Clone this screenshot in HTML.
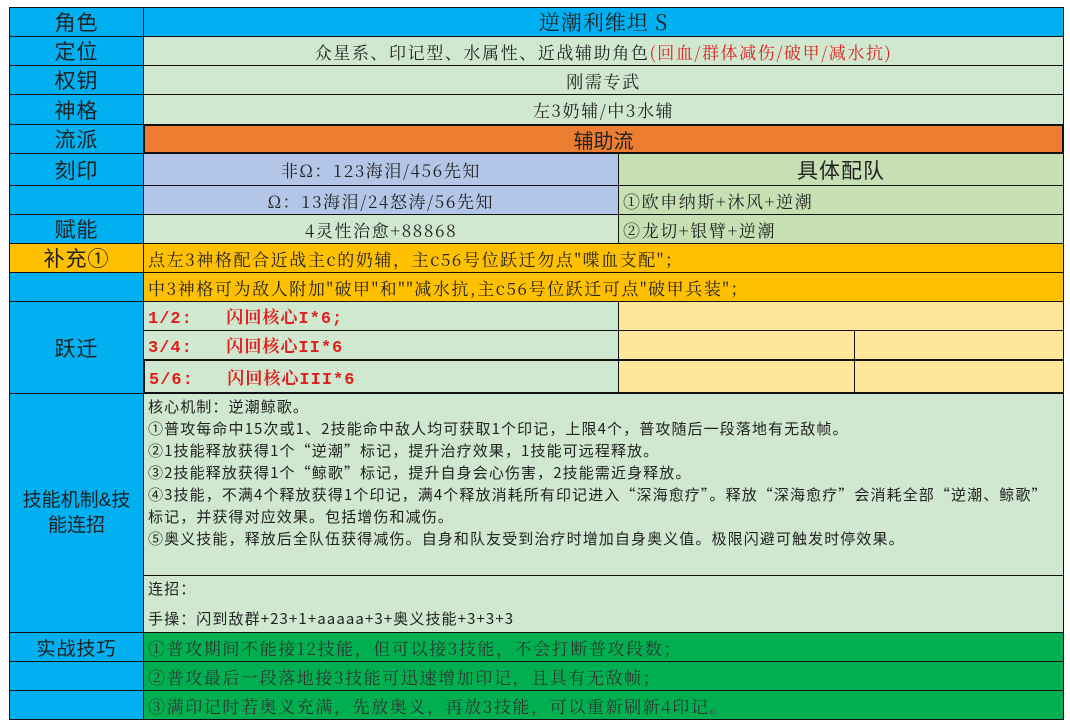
<!DOCTYPE html>
<html><head><meta charset="utf-8"><style>
body{margin:0;width:1070px;height:727px;background:#fff;position:relative;overflow:hidden;font-family:"Liberation Serif","Noto Serif CJK SC",serif;color:#222}
.c{position:absolute;box-sizing:border-box;border:1px solid #111;display:flex;align-items:center;white-space:nowrap;overflow:hidden}
.L{background:#00b0f0;justify-content:center;font-family:"Liberation Sans","Noto Sans CJK SC",sans-serif;font-size:21px;color:#222;letter-spacing:1px}
.g{background:#cfe8cf}
.ctr{justify-content:center}
.t16{font-size:17px;letter-spacing:1.6px;font-family:"Noto Serif CJK SC",serif}
.p{padding-left:4px}
.red{color:#e0201e;font-weight:bold;font-size:17px;padding-left:4px;font-family:"Liberation Mono","Noto Serif CJK SC",monospace;letter-spacing:1px}
.sk{position:absolute;left:148px;top:396px;font-family:"Noto Sans CJK SC",sans-serif;font-size:15px;letter-spacing:1.1px;line-height:22px;color:#222;white-space:nowrap}
</style></head><body>
<div class="c L" style="left:9px;top:7px;width:135px;height:30px">角色</div>
<div class="c L ctr" style="left:143px;top:7px;width:921px;height:30px;font-family:'Noto Serif CJK SC',serif">逆潮利维坦 S</div>
<div class="c L" style="left:9px;top:36px;width:135px;height:30px">定位</div>
<div class="c g ctr t16" style="left:143px;top:36px;width:921px;height:30px">众星系、印记型、水属性、近战辅助角色<span style="color:#e0201e">(回血/群体减伤/破甲/减水抗)</span></div>
<div class="c L" style="left:9px;top:65px;width:135px;height:30px">权钥</div>
<div class="c g ctr t16" style="left:143px;top:65px;width:921px;height:30px">刚需专武</div>
<div class="c L" style="left:9px;top:94px;width:135px;height:31px">神格</div>
<div class="c g ctr t16" style="left:143px;top:94px;width:921px;height:31px">左3奶辅/中3水辅</div>
<div class="c L" style="left:9px;top:124px;width:135px;height:30px">流派</div>
<div class="c ctr" style="left:143px;top:124px;width:921px;height:30px;background:#ed7d31;font-size:20px;font-family:'Liberation Sans','Noto Sans CJK SC',sans-serif;border-width:2px">辅助流</div>
<div class="c L" style="left:9px;top:153px;width:135px;height:33px">刻印</div>
<div class="c ctr t16" style="left:143px;top:153px;width:476px;height:33px;background:#b4c6e7">非Ω：123海泪/456先知</div>
<div class="c ctr" style="left:618px;top:153px;width:446px;height:33px;background:#c6e0b4;font-size:21px;letter-spacing:1px;font-family:'Liberation Sans','Noto Sans CJK SC',sans-serif">具体配队</div>
<div class="c L" style="left:9px;top:185px;width:135px;height:30px"></div>
<div class="c ctr t16" style="left:143px;top:185px;width:476px;height:30px;background:#b4c6e7">Ω：13海泪/24怒涛/56先知</div>
<div class="c t16 p" style="left:618px;top:185px;width:446px;height:30px;background:#c6e0b4">①欧申纳斯+沐风+逆潮</div>
<div class="c L" style="left:9px;top:214px;width:135px;height:30px">赋能</div>
<div class="c g ctr t16" style="left:143px;top:214px;width:476px;height:30px">4灵性治愈+88868</div>
<div class="c t16 p" style="left:618px;top:214px;width:446px;height:30px;background:#c6e0b4">②龙切+银臂+逆潮</div>
<div class="c L" style="left:9px;top:243px;width:135px;height:30px;background:#ffc000">补充①</div>
<div class="c t16 p" style="left:143px;top:243px;width:921px;height:30px;background:#ffc000">点左3神格配合近战主c的奶辅，主c56号位跃迁勿点"喋血支配"；</div>
<div class="c L" style="left:9px;top:272px;width:135px;height:30px"></div>
<div class="c t16 p" style="left:143px;top:272px;width:921px;height:30px;background:#ffc000">中3神格可为敌人附加"破甲"和""减水抗,主c56号位跃迁可点"破甲兵装"；</div>
<div class="c L" style="left:9px;top:301px;width:135px;height:93px">跃迁</div>
<div class="c g red" style="left:143px;top:301px;width:476px;height:30px">1/2:&nbsp;&nbsp;&nbsp;闪回核心I*6;</div>
<div class="c g red" style="left:143px;top:330px;width:476px;height:30px">3/4:&nbsp;&nbsp;&nbsp;闪回核心II*6</div>
<div class="c g red" style="left:143px;top:359px;width:476px;height:35px;border-width:2px 1px 2px 2px">5/6:&nbsp;&nbsp;&nbsp;闪回核心III*6</div>
<div class="c" style="left:618px;top:301px;width:446px;height:30px;background:#ffe699"></div>
<div class="c" style="left:618px;top:330px;width:237px;height:30px;background:#ffe699"></div>
<div class="c" style="left:854px;top:330px;width:210px;height:30px;background:#ffe699"></div>
<div class="c" style="left:618px;top:359px;width:237px;height:35px;background:#ffe699;border-width:2px 1px 2px 1px"></div>
<div class="c" style="left:854px;top:359px;width:210px;height:35px;background:#ffe699;border-width:2px 1px 2px 1px"></div>
<div class="c L" style="left:9px;top:393px;width:135px;height:240px;font-size:19px;white-space:normal;text-align:center;line-height:25px;padding:0 4px;letter-spacing:0">技能机制&amp;技能连招</div>
<div class="c g" style="left:143px;top:393px;width:921px;height:183px"></div>
<div class="c g" style="left:143px;top:575px;width:921px;height:58px"></div>
<div style="position:absolute;left:144px;top:604px;width:919px;height:1px;background:#d6e6d6"></div>
<div class="sk">核心机制：逆潮鲸歌。<br>①普攻每命中15次或1、2技能命中敌人均可获取1个印记，上限4个，普攻随后一段落地有无敌帧。<br>②1技能释放获得1个“逆潮”标记，提升治疗效果，1技能可远程释放。<br>③2技能释放获得1个“鲸歌”标记，提升自身会心伤害，2技能需近身释放。<br>④3技能，不满4个释放获得1个印记，满4个释放消耗所有印记进入“深海愈疗”。释放“深海愈疗”会消耗全部“逆潮、鲸歌”<br>标记，并获得对应效果。包括增伤和减伤。<br>⑤奥义技能，释放后全队伍获得减伤。自身和队友受到治疗时增加自身奥义值。极限闪避可触发时停效果。</div>
<div class="sk" style="top:576px;line-height:26px">连招：<br><span style="display:inline-block;margin-top:4px">手操：闪到敌群+23+1+aaaaa+3+奥义技能+3+3+3</span></div>
<div class="c L" style="left:9px;top:632px;width:135px;height:30px;font-size:19px">实战技巧</div>
<div class="c t16 p" style="left:143px;top:632px;width:921px;height:30px;background:#00b050;color:#333">①普攻期间不能接12技能，但可以接3技能，不会打断普攻段数；</div>
<div class="c L" style="left:9px;top:661px;width:135px;height:30px"></div>
<div class="c t16 p" style="left:143px;top:661px;width:921px;height:30px;background:#00b050;color:#333">②普攻最后一段落地接3技能可迅速增加印记，且具有无敌帧；</div>
<div class="c L" style="left:9px;top:690px;width:135px;height:30px"></div>
<div class="c t16 p" style="left:143px;top:690px;width:921px;height:30px;background:#00b050;color:#333">③满印记时若奥义充满，先放奥义，再放3技能，可以重新刷新4印记。</div>
</body></html>
